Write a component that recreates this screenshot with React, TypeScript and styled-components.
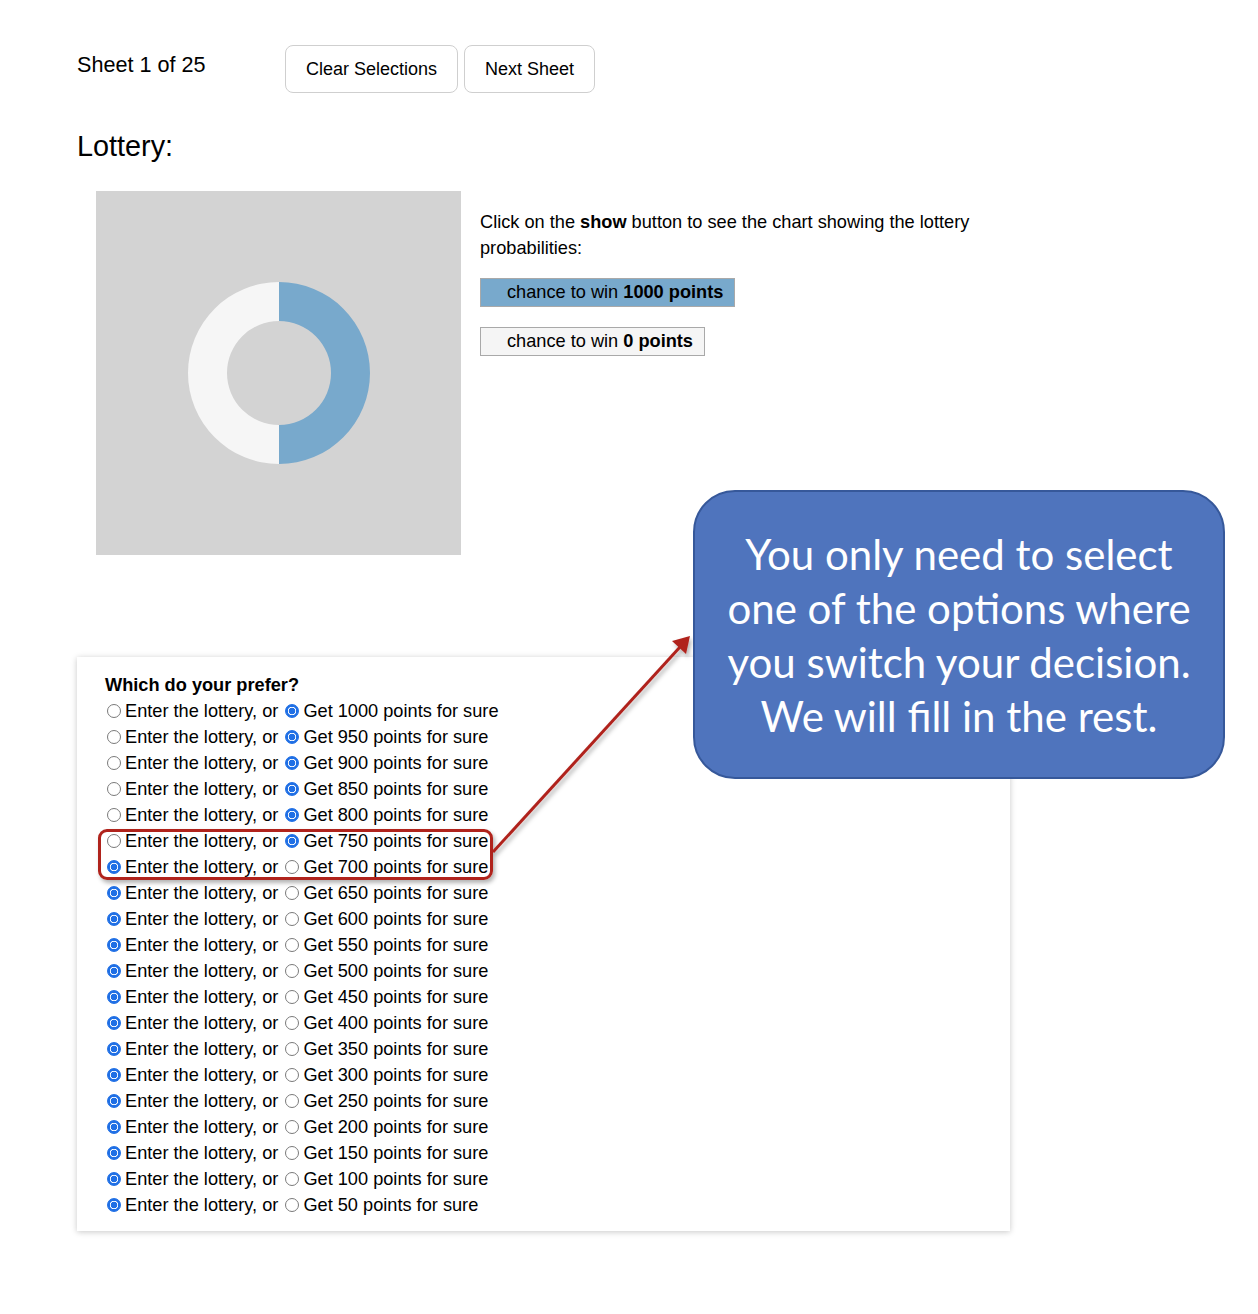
import styled, { createGlobalStyle } from 'styled-components';

const GlobalStyle = createGlobalStyle`
  body {
    margin: 0;
    background: #ffffff;
    font-family: "Liberation Sans", Arial, sans-serif;
    color: #000;
  }
`;

const Page = styled.div`
  position: relative;
  width: 1258px;
  min-height: 1314px;
  padding: 45px 0 0 77px;
  box-sizing: border-box;
`;

const TopBar = styled.div`
  display: flex;
  align-items: flex-start;
`;

const SheetLabel = styled.div`
  width: 208px;
  margin-top: 8px;
  font-size: 21.6px;
  line-height: 24px;
`;

const Buttons = styled.div`
  display: flex;
  gap: 6px;
`;

const Button = styled.button`
  height: 48px;
  padding: 0 20px;
  background: #fff;
  border: 1px solid #cfcfcf;
  border-radius: 8px;
  font-family: "Liberation Sans", Arial, sans-serif;
  font-size: 18px;
  color: #000;
  cursor: pointer;
`;

const Heading = styled.h3`
  margin: 37px 0 0;
  font-size: 28.8px;
  font-weight: normal;
  line-height: 33px;
`;

const LotteryRow = styled.div`
  display: flex;
  align-items: flex-start;
  margin-top: 28px;
`;

const Chart = styled.div`
  width: 365px;
  height: 364px;
  margin-left: 19px;
  background: #d3d3d3;
  display: flex;
  align-items: center;
  justify-content: center;
`;

const Info = styled.div`
  width: 505px;
  margin-left: 19px;
  padding-top: 18px;
  font-size: 18.2px;
  line-height: 26px;
`;

const Legend = styled.div`
  display: flex;
  flex-direction: column;
  align-items: flex-start;
  gap: 20px;
  margin-top: 17px;
`;

const LegendItem = styled.div<{ $fill: string }>`
  padding: 0 11px 0 26px;
  line-height: 27px;
  background: ${(p) => p.$fill};
  border: 1px solid #a9a9a9;
`;

const Card = styled.div`
  width: 933px;
  margin-top: 102px;
  padding: 15px 28px 13px;
  box-sizing: border-box;
  background: #fff;
  box-shadow: 0 1px 6px rgba(0, 0, 0, 0.22);
  font-size: 18.2px;
  line-height: 26px;
`;

const Question = styled.div`
  font-weight: bold;
`;

const Row = styled.div`
  display: flex;
  align-items: center;
  height: 26px;
  white-space: pre;
`;

const Radio = styled.input`
  appearance: none;
  width: 14px;
  height: 14px;
  margin: 0 4px 0 2px;
  border-radius: 50%;
  box-sizing: border-box;
  border: 1px solid #7a7a7a;
  background: #fff;
  flex: none;
  &:checked {
    border-color: #1f6fe5;
    background: radial-gradient(circle, #1f6fe5 0 3.1px, #fff 3.6px 4px, #1f6fe5 4.5px);
  }
`;

const Highlight = styled.div`
  position: absolute;
  left: 98px;
  top: 829px;
  width: 395px;
  height: 51px;
  box-sizing: border-box;
  border: 3px solid #b0231c;
  border-radius: 9px;
  box-shadow: 2px 3px 4px rgba(0, 0, 0, 0.3);
  pointer-events: none;
`;

const ArrowLayer = styled.svg`
  position: absolute;
  left: 0;
  top: 0;
  overflow: visible;
  pointer-events: none;
`;

const Callout = styled.div`
  position: absolute;
  left: 693px;
  top: 490px;
  width: 532px;
  height: 289px;
  box-sizing: border-box;
  background: #4f74bd;
  border: 2px solid #36589a;
  border-radius: 42px;
  display: flex;
  align-items: center;
  justify-content: center;
  text-align: center;
  color: #fff;
  font-family: Lato, "Open Sans", sans-serif;
  font-size: 42px;
  line-height: 54px;
`;

const amounts = Array.from({ length: 20 }, (_, i) => 1000 - i * 50);

const Donut = () => (
  <svg width="365" height="364" viewBox="0 0 365 364">
    <path d="M183 91 A91 91 0 0 1 183 273 L183 234 A52 52 0 0 0 183 130 Z" fill="#78a9cc" />
    <path d="M183 91 A91 91 0 0 0 183 273 L183 234 A52 52 0 0 1 183 130 Z" fill="#f6f6f6" />
  </svg>
);

export default function App() {
  return (
    <Page>
      <GlobalStyle />
      <TopBar>
        <SheetLabel>Sheet 1 of 25</SheetLabel>
        <Buttons>
          <Button>Clear Selections</Button>
          <Button>Next Sheet</Button>
        </Buttons>
      </TopBar>
      <Heading>Lottery:</Heading>
      <LotteryRow>
        <Chart>
          <Donut />
        </Chart>
        <Info>
          Click on the <b>show</b> button to see the chart showing the lottery probabilities:
          <Legend>
            <LegendItem $fill="#78a9cc">chance to win <b>1000 points</b></LegendItem>
            <LegendItem $fill="#f5f5f5">chance to win <b>0 points</b></LegendItem>
          </Legend>
        </Info>
      </LotteryRow>
      <Card>
        <Question>Which do your prefer?</Question>
        {amounts.map((amount) => {
          const lottery = amount <= 700;
          return (
            <Row key={amount}>
              <Radio type="radio" name={`q${amount}`} checked={lottery} readOnly />
              {'Enter the lottery, or '}
              <Radio type="radio" name={`q${amount}`} checked={!lottery} readOnly />
              {`Get ${amount} points for sure`}
            </Row>
          );
        })}
      </Card>

      <Highlight />
      <ArrowLayer width="1258" height="1314">
        <defs>
          <filter id="arrowShadow" x="-20%" y="-20%" width="140%" height="140%">
            <feDropShadow dx="2" dy="3" stdDeviation="2" floodColor="#000" floodOpacity="0.3" />
          </filter>
        </defs>
        <g filter="url(#arrowShadow)">
          <line x1="493" y1="852" x2="680" y2="647" stroke="#b0231c" strokeWidth="3" />
          <polygon points="690,636 686,654 672,641" fill="#b0231c" />
        </g>
      </ArrowLayer>
      <Callout>
        <div>
          You only need to select
          <br />
          one of the options where
          <br />
          you switch your decision.
          <br />
          We will fill in the rest.
        </div>
      </Callout>
    </Page>
  );
}
